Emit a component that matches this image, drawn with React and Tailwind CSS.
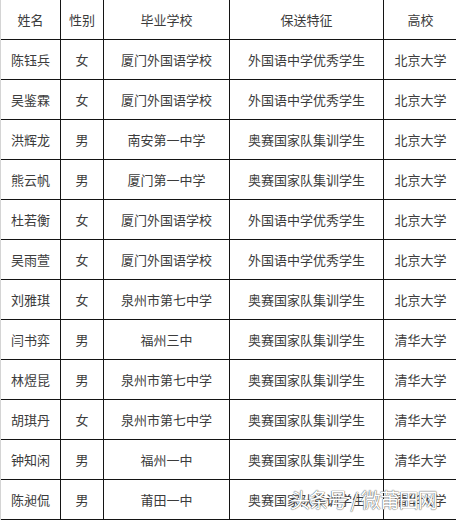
import React from "react";

const rows = [
  ["姓名", "性别", "毕业学校", "保送特征", "高校"],
  ["陈钰兵", "女", "厦门外国语学校", "外国语中学优秀学生", "北京大学"],
  ["吴鉴霖", "女", "厦门外国语学校", "外国语中学优秀学生", "北京大学"],
  ["洪辉龙", "男", "南安第一中学", "奥赛国家队集训学生", "北京大学"],
  ["熊云帆", "男", "厦门第一中学", "奥赛国家队集训学生", "北京大学"],
  ["杜若衡", "女", "厦门外国语学校", "外国语中学优秀学生", "北京大学"],
  ["吴雨萱", "女", "厦门外国语学校", "外国语中学优秀学生", "北京大学"],
  ["刘雅琪", "女", "泉州市第七中学", "奥赛国家队集训学生", "北京大学"],
  ["闫书弈", "男", "福州三中", "奥赛国家队集训学生", "清华大学"],
  ["林煜昆", "男", "泉州市第七中学", "奥赛国家队集训学生", "清华大学"],
  ["胡琪丹", "女", "泉州市第七中学", "奥赛国家队集训学生", "清华大学"],
  ["钟知闲", "男", "福州一中", "奥赛国家队集训学生", "清华大学"],
  ["陈昶侃", "男", "莆田一中", "奥赛国家队集训学生", "清华大学"],
];

export default function App() {
  return (
    <div
      className="relative w-[456px] h-[521px] bg-white overflow-hidden"
      style={{ fontFamily: '"Noto Sans CJK SC", "Noto Sans", sans-serif' }}
    >
      <div className="grid grid-cols-[60px_43px_126px_154px_73px] border-l border-l-[#d4d4d4]">
        {rows.map((r, i) =>
          r.map((c, j) => (
            <div
              key={i + "-" + j}
              className={
                "h-[40px] flex items-center justify-center text-[13px] text-[#3c3c3c] border-b border-b-[#141414] " +
                (j < 4 ? "border-r border-r-[#141414]" : "")
              }
            >
              {c}
            </div>
          ))
        )}
      </div>
      <div className="absolute left-[290px] top-[486px] text-[20px] leading-[28px] text-white tracking-[-1px] [text-shadow:0_0_1px_#555,0_0_1px_#555] whitespace-nowrap">
        头条号 / 微莆田网
      </div>
    </div>
  );
}
